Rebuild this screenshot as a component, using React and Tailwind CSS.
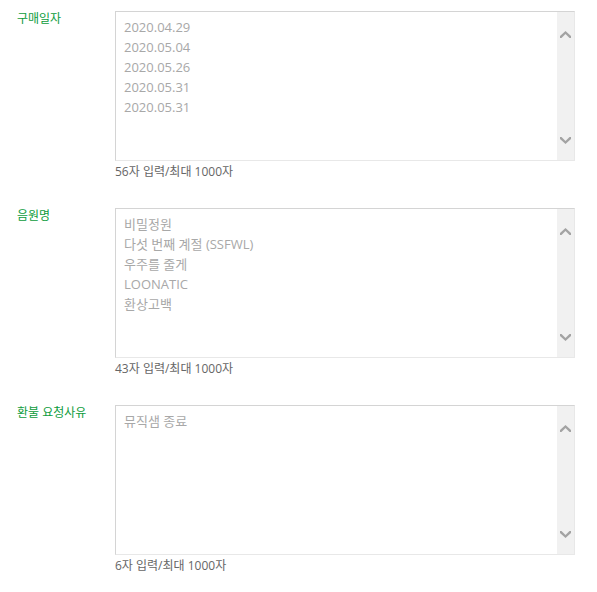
import React from "react";

const font = { fontFamily: '"Open Sans", "Noto Sans CJK KR", sans-serif' };

function Up() {
  return (
    <svg width="11" height="7" viewBox="0 0 11 7">
      <polygon points="0,5 5.5,0 11,5 11,7 9.5,7 5.5,3 1.5,7 0,7" fill="#a3a3a3" />
    </svg>
  );
}
function Down() {
  return (
    <svg width="11" height="7" viewBox="0 0 11 7">
      <polygon points="0,2 5.5,7 11,2 11,0 9.5,0 5.5,4 1.5,0 0,0" fill="#a3a3a3" />
    </svg>
  );
}

function Section({ label, lines, count }) {
  return (
    <div className="flex h-[197px]">
      <div className="w-[98px] shrink-0 text-[12px] leading-[16px] text-[#0d9c3c]">{label}</div>
      <div className="flex flex-col">
        <div className="flex h-[150px] w-[460px] border-t border-l border-t-[#d4d4d4] border-l-[#d4d4d4] border-r border-b border-r-[#e8e8e8] border-b-[#e8e8e8] bg-white">
          <div className="flex-1 pl-[8px] pt-[5px] text-[13px] leading-[20px] text-[#a8a8a8]">
            {lines.map((l, i) => (
              <div key={i}>{l}</div>
            ))}
          </div>
          <div className="flex w-[17px] flex-col items-center justify-between bg-[#f1f1f1] pt-[19px] pb-[16px]">
            <Up />
            <Down />
          </div>
        </div>
        <div className="mt-[2px] text-[12px] leading-[18px] text-[#666666]">{count}</div>
      </div>
    </div>
  );
}

export default function App() {
  return (
    <div className="min-h-[592px] w-[597px] bg-white pl-[17px] pt-[11px]" style={font}>
      <Section
        label="구매일자"
        lines={["2020.04.29", "2020.05.04", "2020.05.26", "2020.05.31", "2020.05.31"]}
        count="56자 입력/최대 1000자"
      />
      <Section
        label="음원명"
        lines={["비밀정원", "다섯 번째 계절 (SSFWL)", "우주를 줄게", "LOONATIC", "환상고백"]}
        count="43자 입력/최대 1000자"
      />
      <Section label="환불 요청사유" lines={["뮤직샘 종료"]} count="6자 입력/최대 1000자" />
    </div>
  );
}
